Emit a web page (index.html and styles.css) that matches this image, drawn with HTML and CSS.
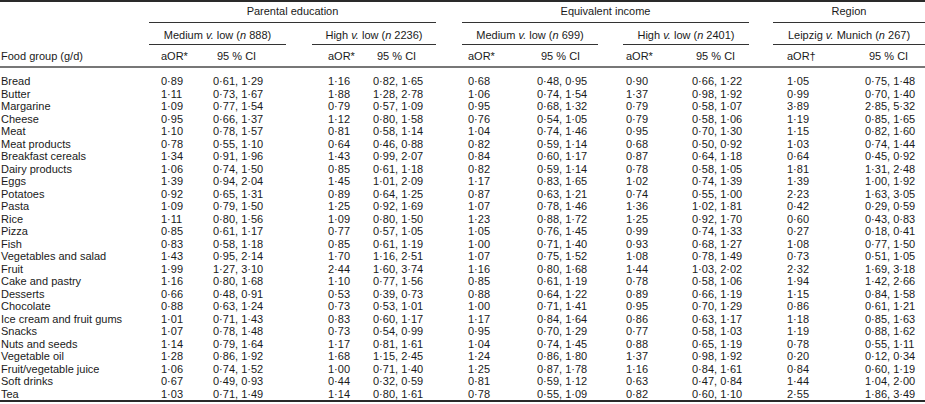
FILE: index.html
```html
<!DOCTYPE html>
<html lang="en">
<head>
<meta charset="utf-8">
<title>Food group odds ratios</title>
<link rel="stylesheet" href="styles.css">
</head>
<body>
<div class="tbl">
  <div class="grp-row r1">
    <div class="g edu">Parental education</div>
    <div class="g inc">Equivalent income</div>
    <div class="g reg">Region</div>
  </div>
  <div class="grp-row r2">
    <div class="g s1">Medium <i>v.</i> low (<i>n</i> 888)</div>
    <div class="g s2">High <i>v.</i> low (<i>n</i> 2236)</div>
    <div class="g s3">Medium <i>v.</i> low (<i>n</i> 699)</div>
    <div class="g s4">High <i>v.</i> low (<i>n</i> 2401)</div>
    <div class="g s5">Leipzig <i>v.</i> Munich (<i>n</i> 267)</div>
  </div>
  <div class="cols r3">
    <span>Food group (g/d)</span>
    <span>aOR*</span><span class="ci">95 % CI</span>
    <span>aOR*</span><span class="ci">95 % CI</span>
    <span>aOR*</span><span class="ci">95 % CI</span>
    <span>aOR*</span><span class="ci">95 % CI</span>
    <span>aOR†</span><span class="ci">95 % CI</span>
  </div>
  <div class="rows">
    <div class="cols"><span>Bread</span><span>0·89</span><span>0·61, 1·29</span><span>1·16</span><span>0·82, 1·65</span><span>0·68</span><span>0·48, 0·95</span><span>0·90</span><span>0·66, 1·22</span><span>1·05</span><span>0·75, 1·48</span></div>
    <div class="cols"><span>Butter</span><span>1·11</span><span>0·73, 1·67</span><span>1·88</span><span>1·28, 2·78</span><span>1·06</span><span>0·74, 1·54</span><span>1·37</span><span>0·98, 1·92</span><span>0·99</span><span>0·70, 1·40</span></div>
    <div class="cols"><span>Margarine</span><span>1·09</span><span>0·77, 1·54</span><span>0·79</span><span>0·57, 1·09</span><span>0·95</span><span>0·68, 1·32</span><span>0·79</span><span>0·58, 1·07</span><span>3·89</span><span>2·85, 5·32</span></div>
    <div class="cols"><span>Cheese</span><span>0·95</span><span>0·66, 1·37</span><span>1·12</span><span>0·80, 1·58</span><span>0·76</span><span>0·54, 1·05</span><span>0·79</span><span>0·58, 1·06</span><span>1·19</span><span>0·85, 1·65</span></div>
    <div class="cols"><span>Meat</span><span>1·10</span><span>0·78, 1·57</span><span>0·81</span><span>0·58, 1·14</span><span>1·04</span><span>0·74, 1·46</span><span>0·95</span><span>0·70, 1·30</span><span>1·15</span><span>0·82, 1·60</span></div>
    <div class="cols"><span>Meat products</span><span>0·78</span><span>0·55, 1·10</span><span>0·64</span><span>0·46, 0·88</span><span>0·82</span><span>0·59, 1·14</span><span>0·68</span><span>0·50, 0·92</span><span>1·03</span><span>0·74, 1·44</span></div>
    <div class="cols"><span>Breakfast cereals</span><span>1·34</span><span>0·91, 1·96</span><span>1·43</span><span>0·99, 2·07</span><span>0·84</span><span>0·60, 1·17</span><span>0·87</span><span>0·64, 1·18</span><span>0·64</span><span>0·45, 0·92</span></div>
    <div class="cols"><span>Dairy products</span><span>1·06</span><span>0·74, 1·50</span><span>0·85</span><span>0·61, 1·18</span><span>0·82</span><span>0·59, 1·14</span><span>0·78</span><span>0·58, 1·05</span><span>1·81</span><span>1·31, 2·48</span></div>
    <div class="cols"><span>Eggs</span><span>1·39</span><span>0·94, 2·04</span><span>1·45</span><span>1·01, 2·09</span><span>1·17</span><span>0·83, 1·65</span><span>1·02</span><span>0·74, 1·39</span><span>1·39</span><span>1·00, 1·92</span></div>
    <div class="cols"><span>Potatoes</span><span>0·92</span><span>0·65, 1·31</span><span>0·89</span><span>0·64, 1·25</span><span>0·87</span><span>0·63, 1·21</span><span>0·74</span><span>0·55, 1·00</span><span>2·23</span><span>1·63, 3·05</span></div>
    <div class="cols"><span>Pasta</span><span>1·09</span><span>0·79, 1·50</span><span>1·25</span><span>0·92, 1·69</span><span>1·07</span><span>0·78, 1·46</span><span>1·36</span><span>1·02, 1·81</span><span>0·42</span><span>0·29, 0·59</span></div>
    <div class="cols"><span>Rice</span><span>1·11</span><span>0·80, 1·56</span><span>1·09</span><span>0·80, 1·50</span><span>1·23</span><span>0·88, 1·72</span><span>1·25</span><span>0·92, 1·70</span><span>0·60</span><span>0·43, 0·83</span></div>
    <div class="cols"><span>Pizza</span><span>0·85</span><span>0·61, 1·17</span><span>0·77</span><span>0·57, 1·05</span><span>1·05</span><span>0·76, 1·45</span><span>0·99</span><span>0·74, 1·33</span><span>0·27</span><span>0·18, 0·41</span></div>
    <div class="cols"><span>Fish</span><span>0·83</span><span>0·58, 1·18</span><span>0·85</span><span>0·61, 1·19</span><span>1·00</span><span>0·71, 1·40</span><span>0·93</span><span>0·68, 1·27</span><span>1·08</span><span>0·77, 1·50</span></div>
    <div class="cols"><span>Vegetables and salad</span><span>1·43</span><span>0·95, 2·14</span><span>1·70</span><span>1·16, 2·51</span><span>1·07</span><span>0·75, 1·52</span><span>1·08</span><span>0·78, 1·49</span><span>0·73</span><span>0·51, 1·05</span></div>
    <div class="cols"><span>Fruit</span><span>1·99</span><span>1·27, 3·10</span><span>2·44</span><span>1·60, 3·74</span><span>1·16</span><span>0·80, 1·68</span><span>1·44</span><span>1·03, 2·02</span><span>2·32</span><span>1·69, 3·18</span></div>
    <div class="cols"><span>Cake and pastry</span><span>1·16</span><span>0·80, 1·68</span><span>1·10</span><span>0·77, 1·56</span><span>0·85</span><span>0·61, 1·19</span><span>0·78</span><span>0·58, 1·06</span><span>1·94</span><span>1·42, 2·66</span></div>
    <div class="cols"><span>Desserts</span><span>0·66</span><span>0·48, 0·91</span><span>0·53</span><span>0·39, 0·73</span><span>0·88</span><span>0·64, 1·22</span><span>0·89</span><span>0·66, 1·19</span><span>1·15</span><span>0·84, 1·58</span></div>
    <div class="cols"><span>Chocolate</span><span>0·88</span><span>0·63, 1·24</span><span>0·73</span><span>0·53, 1·01</span><span>1·00</span><span>0·71, 1·41</span><span>0·95</span><span>0·70, 1·29</span><span>0·86</span><span>0·61, 1·21</span></div>
    <div class="cols"><span>Ice cream and fruit gums</span><span>1·01</span><span>0·71, 1·43</span><span>0·83</span><span>0·60, 1·17</span><span>1·17</span><span>0·84, 1·64</span><span>0·86</span><span>0·63, 1·17</span><span>1·18</span><span>0·85, 1·63</span></div>
    <div class="cols"><span>Snacks</span><span>1·07</span><span>0·78, 1·48</span><span>0·73</span><span>0·54, 0·99</span><span>0·95</span><span>0·70, 1·29</span><span>0·77</span><span>0·58, 1·03</span><span>1·19</span><span>0·88, 1·62</span></div>
    <div class="cols"><span>Nuts and seeds</span><span>1·14</span><span>0·79, 1·64</span><span>1·17</span><span>0·81, 1·61</span><span>1·04</span><span>0·74, 1·45</span><span>0·88</span><span>0·65, 1·19</span><span>0·78</span><span>0·55, 1·11</span></div>
    <div class="cols"><span>Vegetable oil</span><span>1·28</span><span>0·86, 1·92</span><span>1·68</span><span>1·15, 2·45</span><span>1·24</span><span>0·86, 1·80</span><span>1·37</span><span>0·98, 1·92</span><span>0·20</span><span>0·12, 0·34</span></div>
    <div class="cols"><span>Fruit/vegetable juice</span><span>1·06</span><span>0·74, 1·52</span><span>1·00</span><span>0·71, 1·40</span><span>1·25</span><span>0·87, 1·78</span><span>1·16</span><span>0·84, 1·61</span><span>0·84</span><span>0·60, 1·19</span></div>
    <div class="cols"><span>Soft drinks</span><span>0·67</span><span>0·49, 0·93</span><span>0·44</span><span>0·32, 0·59</span><span>0·81</span><span>0·59, 1·12</span><span>0·63</span><span>0·47, 0·84</span><span>1·44</span><span>1·04, 2·00</span></div>
    <div class="cols"><span>Tea</span><span>1·03</span><span>0·71, 1·49</span><span>1·14</span><span>0·80, 1·61</span><span>0·78</span><span>0·55, 1·09</span><span>0·82</span><span>0·60, 1·10</span><span>2·55</span><span>1·86, 3·49</span></div>
  </div>
</div>
</body>
</html>
```

FILE: styles.css
```css
body {
  margin: 0;
  background: #ffffff;
  color: #1a1a1a;
  font-family: "Liberation Sans", Arial, sans-serif;
  font-size: 11px;
}

.tbl {
  width: 925px;
  border-top: 2px solid #2a2a2a;
  border-bottom: 2px solid #2a2a2a;
}

.grp-row {
  display: grid;
  grid-template-columns: 149px 137px 26px 124px 26px 136px 25px 126px 24px 152px;
  line-height: 12.5px;
}

.g {
  text-align: center;
  white-space: nowrap;
  border-bottom: 1px solid #333333;
}

.r1 .g {
  padding: 3px 0 4.5px;
}

.r2 .g {
  padding: 6px 0 2.5px;
}

.edu { grid-column: 2 / 5; }
.inc { grid-column: 6 / 9; }
.reg { grid-column: 10 / 11; padding-left: 22px; }

.s1 { grid-column: 2 / 3; }
.s2 { grid-column: 4 / 5; }
.s3 { grid-column: 6 / 7; }
.s4 { grid-column: 8 / 9; }
.s5 { grid-column: 10 / 11; }

.cols {
  display: grid;
  grid-template-columns: 161px 52px 115px 45px 95px 69px 89px 66px 95px 78px 60px;
  line-height: 12.5px;
  white-space: nowrap;
}

.cols > :first-child {
  padding-left: 1px;
}

.r3 {
  padding: 5px 0 3.5px;
  border-bottom: 2px solid #777777;
}

.r3 .ci {
  padding-left: 4px;
}

.rows {
  padding-top: 7px;
}
```
